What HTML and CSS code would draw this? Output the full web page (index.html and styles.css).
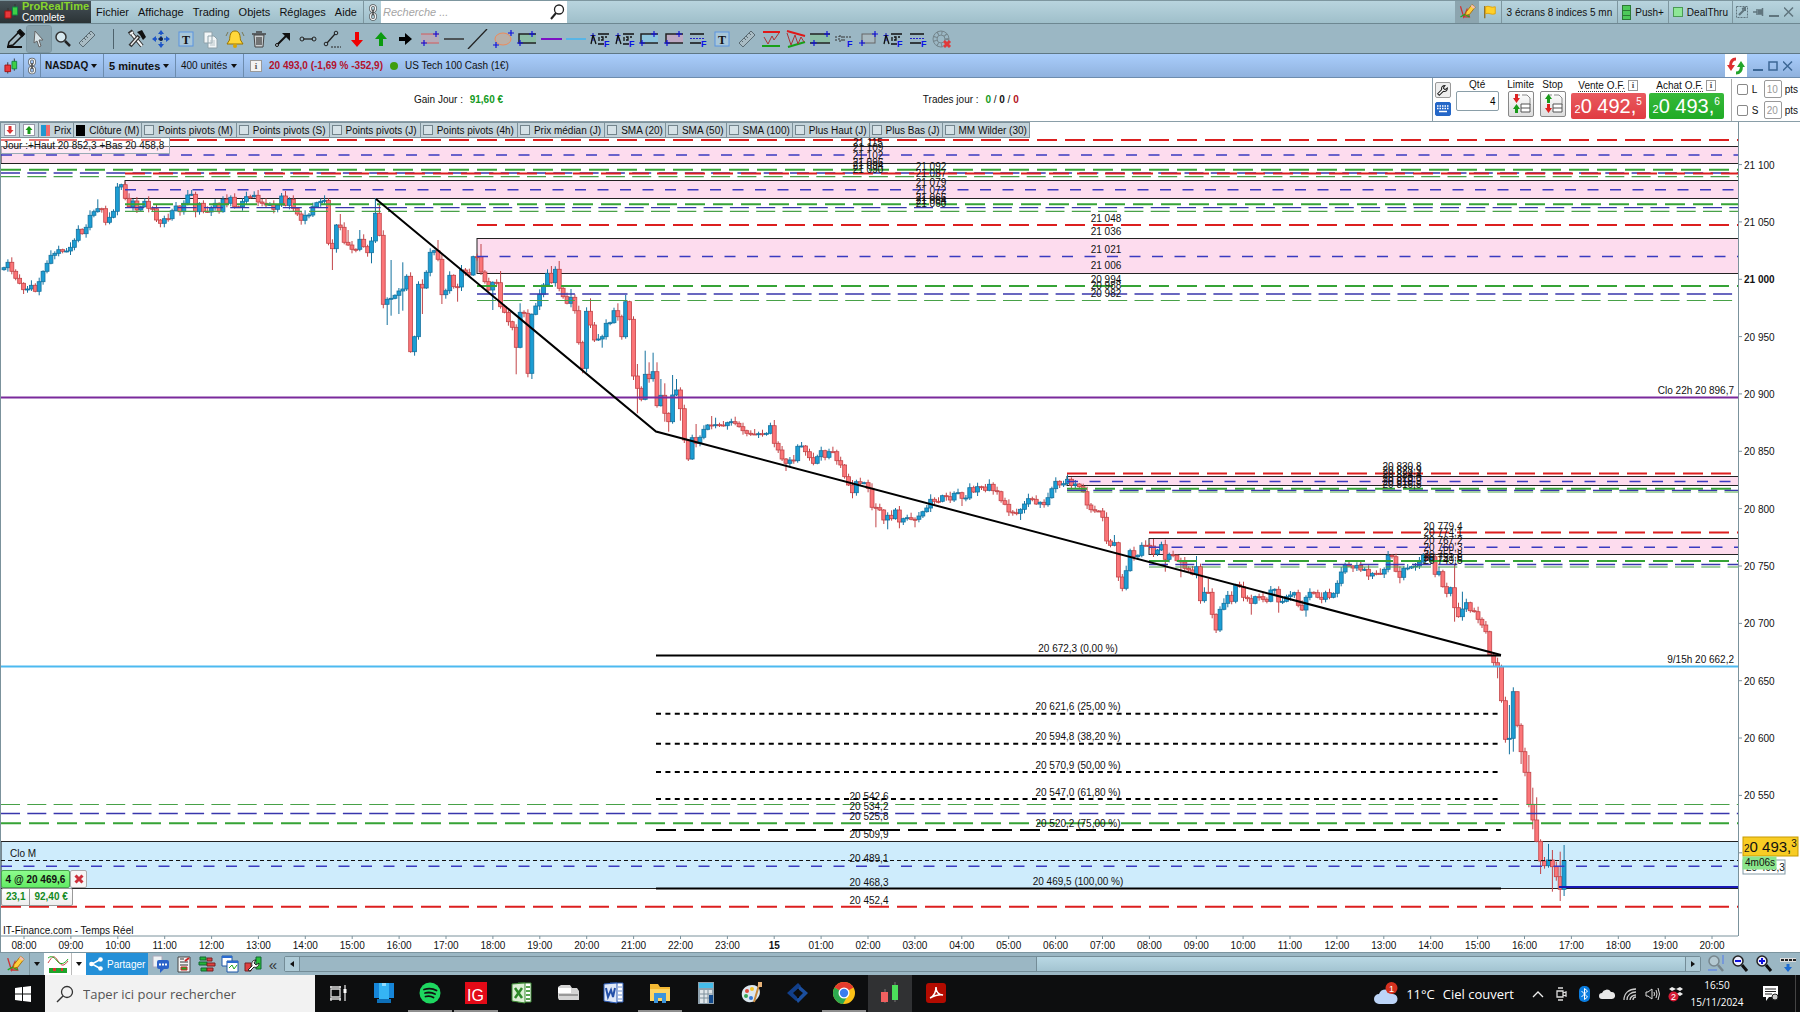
FILE: index.html
```html
<!DOCTYPE html>
<html lang="fr">
<head>
<meta charset="utf-8">
<title>ProRealTime Complete - NASDAQ</title>
<link rel="stylesheet" href="styles.css">
</head>
<body>
<svg class="sprite" aria-hidden="true">
  <symbol id="i-candles" viewBox="0 0 16 16"><path d="M4 4v12M11 0v13" stroke="#333" stroke-width="1"/><path d="M1 7h6v7H1z" fill="#e8383c" stroke="#a11"/><path d="M8.500 3h5v8h-5z" fill="#3ecf45" stroke="#184"/></symbol>
  <symbol id="i-link" viewBox="0 0 10 18"><g fill="none" stroke="#555" stroke-width="2.500"><rect x="2.500" y="2" width="5" height="6" rx="2.500"/><rect x="2.500" y="10" width="5" height="6" rx="2.500"/></g><g fill="none" stroke="#f2f6f7" stroke-width="1.200"><rect x="2.500" y="2" width="5" height="6" rx="2.500"/><rect x="2.500" y="10" width="5" height="6" rx="2.500"/></g><path d="M5 6v6" stroke="#444" stroke-width="1.500"/></symbol>
  <symbol id="i-draw" viewBox="0 0 22 20"><path d="M3 3l4 13 4-9 3 9h-8" fill="none" stroke="#c33" stroke-width="1.500"/><path d="M3 16l5-3 6 3" fill="none" stroke="#2a2" stroke-width="1.500"/><path d="M9 14l1-4 7-9 4 3-7 9z" fill="#ffcf3c" stroke="#a66a00"/><path d="M17 1l4 3-1.500 2-4-3z" fill="#f3bdb5"/></symbol>
  <symbol id="i-fibtext" viewBox="0 0 22 20"><path d="M4 4v8M1.500 6.500h5" stroke="#11c"/><path d="M4 6L2 15M4 6l3 9M9 5h11M9 15h6M10 8v4M12 8h2v3h-2M16 8h2" fill="none" stroke="#111" stroke-width="1.300"/></symbol>
  <symbol id="i-fiblines" viewBox="0 0 22 20"><path d="M3 5h14M3 14h11" stroke="#111" stroke-width="1.500"/><path d="M3 9.500h14" stroke="#22c" stroke-dasharray="2 1"/></symbol>
  <symbol id="i-frame" viewBox="0 0 22 20"><rect x="4" y="3" width="14" height="14" fill="#a8c6d8" stroke="#5a94e0"/></symbol>
  <symbol id="i-ruler" viewBox="0 0 22 20"><path d="M3 14L15 2l4 4L7 18z" fill="#a9bcc4" stroke="#596a72"/><path d="M5 11l2 2M8 9l2 2M10 7l2 2M13 4l2 2" stroke="#596a72"/></symbol>
  <symbol id="i-lens" viewBox="0 0 22 20"><circle cx="9" cy="8" r="5" fill="#d7e8ef" stroke="#333" stroke-width="1.500"/><path d="M13 12l5 5" stroke="#222" stroke-width="2.500"/></symbol>
  <symbol id="i-plus-c" viewBox="0 0 6 6"><path d="M3 0v6M0 3h6" stroke="#11d" stroke-width="1.200"/></symbol>
  <symbol id="i-wrench" viewBox="0 0 16 16"><path d="M2 12l5-5c-1-3 1-5 4-5L9 5l2 2 3-2c0 3-2 5-5 4l-5 5z" fill="#fff" stroke="#222" stroke-width="1.300"/></symbol>
</svg>

<div class="app">
  <header class="menubar">
    <div class="brand">
      <svg width="16" height="16"><use href="#i-candles"/></svg>
      <span><b>ProRealTime</b><i>Complete</i></span>
    </div>
    <nav class="menus">
      <button>Fichier</button><button>Affichage</button><button>Trading</button><button>Objets</button><button>Réglages</button><button>Aide</button>
    </nav>
    <button class="menu-link" aria-label="Lier"><svg width="10" height="19"><use href="#i-link"/></svg></button>
    <label class="search">
      <input type="text" placeholder="Recherche ..." aria-label="Recherche">
      <svg width="15" height="16" viewBox="0 0 15 16"><circle cx="9" cy="5.500" r="4.500" fill="none" stroke="#222" stroke-width="1.300"/><path d="M6 9l-5 6" stroke="#222" stroke-width="2"/></svg>
    </label>
    <div class="spacer"></div>
    <button class="status on" aria-label="Dessin"><svg width="19" height="18"><use href="#i-draw"/></svg></button>
    <button class="status flag" aria-label="Drapeau"><svg width="16" height="16" viewBox="0 0 16 16"><path d="M2 1v14" stroke="#8a6a20" stroke-width="1.500"/><path d="M3 2c4-2 6 2 11 0v8c-5 2-7-2-11 0z" fill="#ffd02a" stroke="#e0a000"/></svg></button>
    <button class="status screens">3 écrans 8 indices 5 mn</button>
    <button class="status"><span class="push-ico"></span>Push+</button>
    <button class="status"><span class="deal-ico"></span>DealThru</button>
    <div class="status winctl">
      <svg width="12" height="12" viewBox="0 0 12 12"><rect x=".5" y=".5" width="11" height="11" fill="none" stroke="#60757e" stroke-dasharray="2 1"/><path d="M3 9l5-5M6 3l3-1v3" stroke="#60757e" stroke-width="2" fill="none"/></svg>
      <svg width="11" height="12" viewBox="0 0 11 12"><path d="M0 6h4M4 3v6M5 4h4v4H5M9.500 2v8" stroke="#60757e" stroke-width="1.500" fill="#60757e"/></svg>
      <svg width="10" height="12" viewBox="0 0 10 12"><path d="M0 10h10" stroke="#60757e" stroke-width="2"/></svg>
      <svg width="10" height="12" viewBox="0 0 10 12"><path d="M0 1.500l9 9M9 1.500l-9 9" stroke="#60757e" stroke-width="1.500"/></svg>
    </div>
  </header>

  <div class="toolbar">
    <div class="tools-main">
      <button aria-label="Crayon"><svg viewBox="0 0 22 20"><path d="M5 13L15 3l4 3-10 10-5 1z" fill="#a5bac3" stroke="#111" stroke-width="1.500"/><path d="M14 3l2-2 4 4-2 2zM3 18h15" stroke="#111" stroke-width="2"/></svg></button>
      <button class="active" aria-label="Curseur"><svg viewBox="0 0 22 20"><path d="M7 2l8 9-4 0 2 6-2 1-2-6-3 2z" fill="#dbe6ea" stroke="#666"/></svg></button>
      <button aria-label="Loupe"><svg><use href="#i-lens"/></svg></button>
      <button aria-label="Règle"><svg><use href="#i-ruler"/></svg></button>
    </div>
    <span class="tool-sep"></span>
    <div class="tools-objects">
      <button aria-label="Outils"><svg viewBox="0 0 22 20"><path d="M6 5l10 12M3 5l4-3" stroke="#333" stroke-width="4"/><path d="M6 5l10 12M4 5l3-2" stroke="#f4f7f8" stroke-width="2"/><path d="M4 17L13 7" stroke="#333" stroke-width="4"/><path d="M5 16l7-8" stroke="#eee" stroke-width="1.500"/><path d="M11 3l5-2 4 7-3 3-3-5z" fill="#111"/></svg></button>
      <button aria-label="Déplacer"><svg viewBox="0 0 22 20"><path d="M11 4v12M5 10h12" stroke="#1c55c8" stroke-width="1.500" stroke-dasharray="2 1"/><path d="M11 1l3 4H8zM11 19l3-4H8zM2 10l4-3v6zM20 10l-4-3v6z" fill="#1c55c8"/><circle cx="11" cy="10" r="2" fill="#124"/></svg></button>
      <button aria-label="Texte"><svg viewBox="0 0 22 20"><use href="#i-frame"/><text x="7" y="15" class="glyph-t">T</text></svg></button>
      <button aria-label="Copier"><svg viewBox="0 0 22 20"><path d="M5 3h8v11H5zM9 7h6l3 3v9H9z" fill="#f2f6f7" stroke="#8fa2aa"/><path d="M11 12h5M11 14h5M11 16h5" stroke="#b7c4c9"/></svg></button>
      <button aria-label="Alerte"><svg viewBox="0 0 22 20"><path d="M11 2c5 0 5 5 5.500 9l2.500 4H3l2.500-4C6 7 6 2 11 2z" fill="#ffd83a" stroke="#9a7400"/><circle cx="11" cy="17" r="2" fill="#d9a400"/><path d="M4 3L2 7M18 3l2 4" stroke="#775" fill="none"/></svg></button>
      <button aria-label="Supprimer"><svg viewBox="0 0 22 20"><path d="M6 6h10l-1 12H7z" fill="#c9ced0" stroke="#444"/><path d="M4 5h14M8 3h6M9 8v8M11 8v8M13 8v8" stroke="#444" stroke-width="1.300"/></svg></button>
      <button aria-label="Flèche"><svg viewBox="0 0 22 20"><path d="M5 16L14 7" stroke="#111" stroke-width="2"/><path d="M10 4h8v8z" fill="#111"/><circle cx="5" cy="16" r="1.500" fill="#b8c6cc" stroke="#111"/></svg></button>
      <button aria-label="Segment"><svg viewBox="0 0 22 20"><path d="M6 10h10" stroke="#222" stroke-width="1.300"/><circle cx="5" cy="10" r="2" fill="none" stroke="#222"/><circle cx="17" cy="10" r="2" fill="none" stroke="#222"/></svg></button>
      <button aria-label="Demi-droite"><svg viewBox="0 0 22 20"><path d="M6 14L14 5" stroke="#222" stroke-width="1.300"/><path d="M10 18h10" stroke="#222" stroke-dasharray="2 1"/><circle cx="5" cy="15" r="1.800" fill="none" stroke="#222"/><circle cx="15" cy="4" r="1.800" fill="none" stroke="#222"/></svg></button>
      <button aria-label="Flèche bas"><svg viewBox="0 0 22 20"><path d="M9 3h4v8h4l-6 7-6-7h4z" fill="#f00000"/></svg></button>
      <button aria-label="Flèche haut"><svg viewBox="0 0 22 20"><path d="M9 17h4V10h4l-6-7-6 7h4z" fill="#0b9b10"/></svg></button>
      <button aria-label="Flèche droite"><svg viewBox="0 0 22 20"><path d="M5 8h6V4l7 6-7 6v-4H5z" fill="#000"/></svg></button>
      <button aria-label="Canal"><svg viewBox="0 0 22 20"><path d="M2 5h18v9H2z" fill="#b5abb8"/><path d="M2 5h18M2 14h18" stroke="#d45a5a"/><use href="#i-plus-c" x="14" y="2" width="6" height="6"/><use href="#i-plus-c" x="2" y="11" width="6" height="6"/></svg></button>
      <button aria-label="Horizontale"><svg viewBox="0 0 22 20"><path d="M1 10h20" stroke="#333" stroke-width="1.500"/></svg></button>
      <button aria-label="Droite"><svg viewBox="0 0 22 20"><path d="M1 20L20 0" stroke="#222" stroke-width="1.300"/></svg></button>
      <button aria-label="Ellipse"><svg viewBox="0 0 22 20"><ellipse cx="11" cy="10" rx="8" ry="6" fill="#b9b0a8" stroke="#ef8b5a"/><use href="#i-plus-c" x="16" y="1" width="6" height="6"/><use href="#i-plus-c" x="1" y="13" width="6" height="6"/></svg></button>
      <button aria-label="Rectangle vert"><svg viewBox="0 0 22 20"><path d="M3 5h17v9H3z" fill="#8bbda5"/><path d="M20 5H3v9h17" fill="none" stroke="#222" stroke-width="1.500"/><use href="#i-plus-c" x="13" y="2" width="6" height="6"/><use href="#i-plus-c" x="1" y="11" width="6" height="6"/></svg></button>
      <button aria-label="Ligne violette"><svg viewBox="0 0 22 20"><path d="M0 10h21" stroke="#7d12c4" stroke-width="2"/></svg></button>
      <button aria-label="Ligne bleue"><svg viewBox="0 0 22 20"><path d="M1 10h20" stroke="#42b5f2" stroke-width="1.500"/></svg></button>
      <button aria-label="Fibonacci 1"><svg viewBox="0 0 22 20"><use href="#i-fibtext"/><text x="15" y="18" class="glyph-f">F</text></svg></button>
      <button aria-label="Fibonacci 2"><svg viewBox="0 0 22 20"><use href="#i-fibtext"/><text x="15" y="18" class="glyph-f">F</text></svg></button>
      <button aria-label="Zone bleue"><svg viewBox="0 0 22 20"><path d="M3 5h17v9H3z" fill="#8cc4dc"/><path d="M20 5H3v9h17" fill="none" stroke="#222" stroke-width="1.500"/><use href="#i-plus-c" x="13" y="2" width="6" height="6"/><use href="#i-plus-c" x="1" y="11" width="6" height="6"/></svg></button>
      <button aria-label="Zone rose"><svg viewBox="0 0 22 20"><path d="M3 5h17v9H3z" fill="#bda9c2"/><path d="M20 5H3v9h17" fill="none" stroke="#222" stroke-width="1.500"/><use href="#i-plus-c" x="13" y="2" width="6" height="6"/><use href="#i-plus-c" x="1" y="11" width="6" height="6"/></svg></button>
      <button aria-label="Niveaux"><svg viewBox="0 0 22 20"><use href="#i-fiblines"/><text x="14" y="18" class="glyph-f">F</text></svg></button>
      <button aria-label="Note"><svg viewBox="0 0 22 20"><use href="#i-frame"/><text x="7" y="15" class="glyph-t">T</text></svg></button>
      <button aria-label="Mesure"><svg><use href="#i-ruler"/></svg></button>
      <button aria-label="Canal auto"><svg viewBox="0 0 22 20"><path d="M3 3h17" stroke="#e01818" stroke-width="2"/><path d="M2 17h18" stroke="#18a018" stroke-width="2"/><path d="M4 8l4 7 4-8 2 4 5-7" fill="none" stroke="#a33"/></svg></button>
      <button aria-label="Triangle auto"><svg viewBox="0 0 22 20"><path d="M2 2l18 5" stroke="#e01818" stroke-width="2"/><path d="M3 18l17-5" stroke="#18a018" stroke-width="2"/><path d="M2 4l4 12 4-10 3 9 3-7 3 5" fill="none" stroke="#a33"/></svg></button>
      <button aria-label="Parallèles"><svg viewBox="0 0 22 20"><path d="M1 5h20v9H1z" fill="#8bbda5"/><path d="M1 5h20M1 14h20" stroke="#222" stroke-width="1.500"/><use href="#i-plus-c" x="15" y="2" width="6" height="6"/><use href="#i-plus-c" x="2" y="11" width="6" height="6"/></svg></button>
      <button aria-label="Extension"><svg viewBox="0 0 22 20"><path d="M3 7v6M6 7h3v5H6zM11 7v5M13 8h5" fill="none" stroke="#333" stroke-dasharray="2 1"/><text x="14" y="18" class="glyph-f">F</text></svg></button>
      <button aria-label="Rectangle"><svg viewBox="0 0 22 20"><rect x="4" y="5" width="13" height="9" fill="#a8b9c0" stroke="#666"/><use href="#i-plus-c" x="14" y="2" width="6" height="6"/><use href="#i-plus-c" x="1" y="11" width="6" height="6"/></svg></button>
      <button aria-label="Fibonacci 3"><svg viewBox="0 0 22 20"><use href="#i-fibtext"/><text x="15" y="18" class="glyph-f">F</text></svg></button>
      <button aria-label="Niveaux 2"><svg viewBox="0 0 22 20"><use href="#i-fiblines"/><text x="14" y="18" class="glyph-f">F</text></svg></button>
      <button aria-label="Effacer"><svg viewBox="0 0 22 20"><circle cx="10" cy="10" r="8" fill="none" stroke="#75868d"/><circle cx="10" cy="10" r="4" fill="none" stroke="#75868d"/><circle cx="10" cy="10" r="6" fill="none" stroke="#75868d" stroke-width="4" stroke-dasharray="1 3"/><path d="M12 12h8v7h-8z" fill="#9bb5c1"/><path d="M13 12l6 6M19 12l-6 6" stroke="#e03a3a" stroke-width="3"/></svg></button>
    </div>
  </div>

  <div class="titlebar">
    <div class="cell ico"><svg width="16" height="16"><use href="#i-candles"/></svg></div>
    <div class="cell link"><svg width="10" height="18"><use href="#i-link"/></svg></div>
    <button class="cell drop symbol"><b>NASDAQ</b></button>
    <button class="cell drop frame"><b>5 minutes</b></button>
    <button class="cell drop units">400 unités</button>
    <div class="quote"><span class="info">i</span><b>20 493,0 (-1,69 % -352,9)</b><span class="dot"></span><span>US Tech 100 Cash (1€)</span></div>
    <div class="spacer"></div>
    <button class="refresh" aria-label="Actualiser"><svg width="18" height="18" viewBox="0 0 18 18"><path d="M9 2C5 2 3.500 5 3.500 9" fill="none" stroke="#dc3030" stroke-width="3"/><path d="M0 8h8l-4 6z" fill="#dc3030"/><path d="M9 16c4 0 5.500-3 5.500-7" fill="none" stroke="#23a62c" stroke-width="3"/><path d="M10 10h8l-4-6z" fill="#23a62c"/></svg></button>
    <div class="winbox">
      <svg width="10" height="12" viewBox="0 0 10 12"><path d="M0 10h10" stroke="#3c6795" stroke-width="2"/></svg>
      <svg width="10" height="12" viewBox="0 0 10 12"><path d="M1 2h8v8H1z" fill="none" stroke="#3c6795" stroke-width="1.500"/></svg>
      <svg width="10" height="12" viewBox="0 0 10 12"><path d="M0 1.500l9 9M9 1.500l-9 9" stroke="#3c6795" stroke-width="1.500"/></svg>
    </div>
  </div>

  <section class="trade">
    <div class="day-stats">
      <div>Gain Jour : <b class="up">91,60 €</b></div>
      <div>Trades jour : <b class="up">0</b> / <b>0</b> / <b class="down">0</b></div>
    </div>
    <div class="order">
      <div class="order-tools">
        <button aria-label="Réglages"><svg width="13" height="13"><use href="#i-wrench"/></svg></button>
        <button class="kbd" aria-label="Clavier"><svg width="14" height="10" viewBox="0 0 14 10"><path d="M1 2h12M1 4.500h12" stroke="#fff" stroke-width="1.500" stroke-dasharray="1.500 1"/><path d="M3 7.500h8" stroke="#fff" stroke-width="1.500"/></svg></button>
      </div>
      <label class="qty"><span>Qté</span><input type="text" value="4"></label>
      <div class="kind"><span>Limite</span><button aria-label="Ordre limite"><svg width="20" height="20" viewBox="0 0 20 20"><path d="M11 1h5l3 3v7M5 1h4" fill="none" stroke="#888"/><path d="M10 10h9v8h-9zM10 14h9" fill="#fff" stroke="#555"/><path d="M4 0h3v4h2L5.500 9 2 4h2z" fill="#d22"/><path d="M4 19h3v-4h2l-3.500-5L2 15h2z" fill="#1a9a1a"/></svg></button></div>
      <div class="kind"><span>Stop</span><button aria-label="Ordre stop"><svg width="20" height="20" viewBox="0 0 20 20"><path d="M11 1h5l3 3v7M5 1h4" fill="none" stroke="#888"/><path d="M10 10h9v8h-9zM10 14h9" fill="#fff" stroke="#555"/><path d="M4 9h3V5h2L5.500 0 2 5h2z" fill="#1a9a1a"/><path d="M4 10h3v4h2l-3.500 5L2 14h2z" fill="#d22"/></svg></button></div>
      <div class="side sell"><span><u>Vente O.F.</u><em>i</em></span><button><small>2</small>0 492,<sup>5</sup></button></div>
      <div class="side buy"><span><u>Achat O.F.</u><em>i</em></span><button><small>2</small>0 493,<sup>6</sup></button></div>
      <div class="offsets">
        <div><label><input type="checkbox"> L</label><input type="text" value="10" aria-label="Points L"> pts</div>
        <div><label><input type="checkbox"> S</label><input type="text" value="20" aria-label="Points S"> pts</div>
      </div>
    </div>
  </section>

  <main class="chart">
    <svg id="plot" class="plot" role="img" aria-label="NASDAQ 5 minutes"></svg>
    <div class="legend">
      <button aria-label="Baisse"><svg width="12" height="12" viewBox="0 0 12 12"><rect x=".5" y=".5" width="11" height="11" fill="#fff" stroke="#99a"/><path d="M4.500 2h3v4h2L6 10 2.500 6h2z" fill="#d33"/></svg></button>
      <button aria-label="Hausse"><svg width="12" height="12" viewBox="0 0 12 12"><rect x=".5" y=".5" width="11" height="11" fill="#fff" stroke="#99a"/><path d="M4.500 10h3V6h2L6 2 2.500 6h2z" fill="#1a9a1a"/></svg></button>
      <span class="key"><i class="sw-price"></i>Prix</span>
      <span class="key"><i class="sw-close"></i>Clôture (M)</span>
      <label class="long"><input type="checkbox">Points pivots (M)</label>
      <label class="long"><input type="checkbox">Points pivots (S)</label>
      <label class="long"><input type="checkbox">Points pivots (J)</label>
      <label class="long"><input type="checkbox">Points pivots (4h)</label>
      <label class="long"><input type="checkbox">Prix médian (J)</label>
      <label><input type="checkbox">SMA (20)</label>
      <label><input type="checkbox">SMA (50)</label>
      <label><input type="checkbox">SMA (100)</label>
      <label><input type="checkbox">Plus Haut (J)</label>
      <label><input type="checkbox">Plus Bas (J)</label>
      <label><input type="checkbox">MM Wilder (30)</label>
    </div>
    <div class="day-range">Jour :+Haut 20 852,3 +Bas 20 458,8</div>
    <div class="position">
      <div><button class="pos-main">4 @ 20 469,6</button><button class="pos-close" aria-label="Fermer"><svg width="10" height="10" viewBox="0 0 10 10"><path d="M1.500 1.500l7 7M8.500 1.500l-7 7" stroke="#cc2f3a" stroke-width="3"/></svg></button></div>
      <div class="pos-gain"><span>23,1</span><span>92,40 €</span></div>
    </div>
  </main>

  <footer class="navbar">
    <button class="n-draw" aria-label="Dessiner"><svg width="20" height="19"><use href="#i-draw"/></svg></button>
    <button class="n-arrow" aria-label="Options dessin"></button>
    <button class="n-indic" aria-label="Indicateurs"><svg width="22" height="20" viewBox="0 0 22 20"><path d="M1 9c5-8 6-8 10-2s6 5 10 0" fill="none" stroke="#c44"/><path d="M1 4c5-4 8 2 10 4s6 3 10-3" fill="none" stroke="#2a2"/><path d="M2 14h18v5H2z" fill="#1fa32a"/><path d="M6 14h3v3H6zM14 14h2v3h-2z" fill="#d33"/></svg></button>
    <button class="n-arrow white" aria-label="Options indicateurs"></button>
    <button class="share"><svg width="14" height="14" viewBox="0 0 14 14"><path d="M12 2L3 7l9 5" fill="none" stroke="#fff" stroke-width="1.500"/><circle cx="11.500" cy="2.500" r="2.300" fill="#fff"/><circle cx="2.500" cy="7" r="2.300" fill="#fff"/><circle cx="11.500" cy="11.500" r="2.300" fill="#fff"/></svg>Partager</button>
    <div class="n-icons">
      <button aria-label="Messages"><svg viewBox="0 0 18 18"><path d="M1 1h9v11H1z" fill="#eef3f5" stroke="#aab"/><rect x="5" y="5" width="12" height="9" rx="2" fill="#2a62c9"/><path d="M8 14v4l4-4z" fill="#2a62c9"/><path d="M7 9.500h2M10 9.500h2M13 9.500h2" stroke="#fff" stroke-width="2"/></svg></button>
      <button aria-label="Rapport"><svg viewBox="0 0 18 18"><path d="M3 2h12v15H3z" fill="#f4f4f4" stroke="#444"/><path d="M5 4h4M5 7h8M5 10h8" stroke="#333"/><path d="M10 6l4-3" stroke="#c22" stroke-width="2"/><path d="M6 12h6v3H6z" stroke="#c22" fill="#2a2"/></svg></button>
      <button aria-label="Carnet"><svg viewBox="0 0 18 18"><path d="M2 2h6v3H2zM1 7h8v3H1zM3 13h6v3H3z" fill="#25b535" stroke="#163"/><path d="M9 3h5v3H9zM9 8h8v3H9zM9 13h6v3H9z" fill="#e04040" stroke="#722"/></svg></button>
      <button aria-label="Fenêtres"><svg viewBox="0 0 18 18"><path d="M1 1h10v10H1z" fill="#fff" stroke="#1d57a8"/><path d="M6 6h11v11H6z" fill="#fff" stroke="#1d57a8"/><path d="M1 2h10M6 7h11" stroke="#2a6bd0" stroke-width="2"/><path d="M8 13l3-3 2 4 3-4" fill="none" stroke="#2a2"/></svg></button>
      <button aria-label="Automatique"><svg viewBox="0 0 18 18"><path d="M12 2h5v12h-5z" fill="#2abf3a" stroke="#163"/><path d="M1 8h6v8H1z" fill="#e04040" stroke="#722"/><path d="M4 15l4-4c-1-4 1-6 4-6l-2 3 2 2 3-2c0 4-3 5-5 4l-4 4z" fill="#fff" stroke="#222"/></svg></button>
    </div>
    <button class="collapse" aria-label="Réduire">«</button>
    <div class="scrollbar">
      <button class="sb-left" aria-label="Gauche"></button>
      <div class="sb-track"></div>
      <div class="sb-thumb"></div>
      <button class="sb-right" aria-label="Droite"></button>
    </div>
    <div class="zoomers">
      <button aria-label="Ajuster"><svg viewBox="0 0 20 20"><circle cx="8" cy="7" r="5" fill="#b4c9d2" stroke="#77868d" stroke-width="1.500"/><path d="M12 11l5 6" stroke="#77868d" stroke-width="2.500"/><path d="M17 1v9M2 16h9" stroke="#6b8fe0" stroke-width="1.500"/></svg></button>
      <button aria-label="Dézoomer"><svg viewBox="0 0 20 20"><circle cx="8" cy="7" r="5" fill="#eef" stroke="#222" stroke-width="1.500"/><path d="M12 11l5 6" stroke="#111" stroke-width="3"/><path d="M5 7h6" stroke="#11d" stroke-width="2"/></svg></button>
      <button aria-label="Zoomer"><svg viewBox="0 0 20 20"><circle cx="8" cy="7" r="5" fill="#eef" stroke="#222" stroke-width="1.500"/><path d="M12 11l5 6" stroke="#111" stroke-width="3"/><path d="M5 7h6M8 4v6" stroke="#11d" stroke-width="2"/></svg></button>
      <button aria-label="Échelle"><svg viewBox="0 0 20 20"><path d="M2 4h16v4H2z" fill="#ddd"/><path d="M3 6h15" stroke="#222" stroke-width="2" stroke-dasharray="3 1"/><path d="M8.500 10h3v3h2.500l-4 5-4-5h2.500z" fill="#1d6bd0"/></svg></button>
    </div>
  </footer>

  <div class="taskbar">
    <button class="start" aria-label="Démarrer"><svg width="16" height="16" viewBox="0 0 16 16"><path d="M0 2l7-1v6.500H0zM8 1l8-1v7.500H8zM0 8.500h7V15l-7-1zM8 8.500h8V16l-8-1z" fill="#fff"/></svg></button>
    <label class="win-search"><svg width="18" height="18" viewBox="0 0 18 18"><circle cx="11" cy="7" r="5.500" fill="none" stroke="#333" stroke-width="1.300"/><path d="M7 11l-6 6" stroke="#333" stroke-width="1.500"/></svg><input type="text" placeholder="Taper ici pour rechercher" aria-label="Taper ici pour rechercher"></label>
    <div class="apps">
      <button aria-label="Affichage des tâches"><svg viewBox="0 0 24 24"><path d="M5 8h9v8H5zM5 5v2M14 5v2M4 6h11M5 17v3M14 17v3M4 18h11M19 4v16" fill="none" stroke="#ddd" stroke-width="1.300"/><path d="M17.500 8h3v4h-3z" fill="#fff"/></svg></button>
      <button aria-label="Bureau"><svg viewBox="0 0 24 24"><path d="M2 2h20v15H2z" fill="#1686d9"/><path d="M7 2h10v17H7z" fill="#35b4f4"/><path d="M5 18h14v4H5z" fill="#0d6fb8"/><path d="M10 2h4v3h-4z" fill="#8fdcff"/></svg></button>
      <button class="run" aria-label="Spotify"><svg viewBox="0 0 24 24"><circle cx="12" cy="12" r="10.500" fill="#1ed760"/><path d="M6 8.500c5-1.500 9-1 12.500 1M7 12c4-1 7-.5 10 1M7.500 15.500c3-.8 6-.3 8 1" fill="none" stroke="#111" stroke-width="1.800" stroke-linecap="round"/></svg></button>
      <button class="run" aria-label="IG"><svg viewBox="0 0 24 24"><path d="M1 1h22v22H1z" fill="#e20a17"/><text x="3" y="20" class="ig">IG</text></svg></button>
      <button aria-label="Excel"><svg viewBox="0 0 24 24"><path d="M8 2h13v19H8z" fill="#fff" stroke="#3d8a35"/><path d="M2 3l13-1v20L2 20z" fill="#dcefd5" stroke="#3d8a35"/><path d="M5 7l7 10M12 7L5 17" stroke="#2f8a2a" stroke-width="2.500"/><path d="M16 6h4M16 10h4M16 14h4M16 18h4" stroke="#59a550" stroke-width="2"/></svg></button>
      <button aria-label="Imprimante"><svg viewBox="0 0 24 24"><path d="M2 6l3-2h9l2 3h5l2 3v9H3L2 17z" fill="#d5d5d5"/><path d="M2 7h13v5H2z" fill="#fff"/><path d="M3 14h19" stroke="#999" stroke-width="2"/></svg></button>
      <button aria-label="Word"><svg viewBox="0 0 24 24"><path d="M8 2h13v19H8z" fill="#fff" stroke="#2b5bb5"/><path d="M2 3l13-1v20L2 20z" fill="#dfe8f8" stroke="#2b5bb5"/><path d="M4 7l2 9 3-7 2 7 2-9" fill="none" stroke="#2450a8" stroke-width="2"/><path d="M16 6h4M16 10h4M16 14h4M16 18h4" stroke="#6c8fd0"/></svg></button>
      <button class="run" aria-label="Explorateur"><svg viewBox="0 0 24 24"><path d="M2 3h8l2 3h10v14H2z" fill="#f3b832"/><path d="M2 8h20v12H2z" fill="#fcd462"/><path d="M6 12h12v10h-4v-5h-4v5H6z" fill="#3b94dc"/></svg></button>
      <button aria-label="Calculatrice"><svg viewBox="0 0 24 24"><path d="M4 1h16v22H4z" fill="#8fa1ad"/><path d="M5 2h14v5H5z" fill="#45bdea"/><path d="M6 9h12v13H6z" fill="#dfe6ea"/><path d="M6 13h12M6 17h12M10 9v13M14 9v13" stroke="#7d8f9b"/><path d="M15 14h4v8h-4z" fill="#134a8c"/></svg></button>
      <button aria-label="Paint"><svg viewBox="0 0 24 24"><path d="M12 4c8 0 9 7 7 11s-6 7-11 6S1 15 2 11s5-7 10-7z" fill="#dce7ef"/><circle cx="7" cy="10" r="2" fill="#e24a3b"/><circle cx="12" cy="8" r="2" fill="#f5c52a"/><circle cx="6" cy="15" r="2" fill="#3aa655"/><circle cx="11" cy="17" r="2" fill="#3578d8"/><path d="M14 21l5-17" stroke="#c98a3d" stroke-width="2"/><path d="M18 1h4v5h-4z" fill="#e7b277"/></svg></button>
      <button aria-label="Outil"><svg viewBox="0 0 24 24"><path d="M1 12L12 2l3 3-8 7 5 5-2 3z" fill="#123f8a"/><path d="M14 5l8 7-10 10-2-3 7-7-5-4z" fill="#1b4f9f"/><path d="M12 8v9" stroke="#0d0e0f" stroke-width="2"/></svg></button>
      <button class="run" aria-label="Chrome"><svg viewBox="0 0 24 24"><circle cx="12" cy="12" r="11" fill="#fbc116"/><path d="M12 12L2.500 6.500A11 11 0 0 1 21.500 6.500z" fill="#e33b2e"/><path d="M2.500 6.500A11 11 0 0 0 11 23l5-9-4-2z" fill="#2da94f"/><circle cx="12" cy="12" r="5.500" fill="#fff"/><circle cx="12" cy="12" r="4.200" fill="#3b7ded"/></svg></button>
      <button class="focus" aria-label="ProRealTime"><svg viewBox="0 0 24 24"><path d="M7 8v14M17 1v20" stroke="#777"/><path d="M3 11h7v10H3z" fill="#f06060"/><path d="M14 4h6v15h-6z" fill="#4be05a"/></svg></button>
      <button aria-label="Acrobat"><svg viewBox="0 0 24 24"><rect x="2" y="2" width="20" height="20" rx="3" fill="#b30b00"/><path d="M6 17c4-2 6-6 6-11 0 5 3 8 7 8-5-1-9 1-13 3z" fill="none" stroke="#fff" stroke-width="1.500"/></svg></button>
    </div>
    <div class="spacer"></div>
    <button class="weather"><svg width="24" height="24" viewBox="0 0 24 24"><path d="M5 22a5 5 0 0 1 0-10 7 7 0 0 1 13 0 5 5 0 0 1 1 10z" fill="#bcd4f7"/><circle cx="17.500" cy="6" r="6" fill="#d5311f"/><text x="15" y="10" class="badge">1</text></svg><span>11°C</span><span>Ciel couvert</span></button>
    <div class="tray">
      <svg viewBox="0 0 16 16"><path d="M3 11l5-5 5 5" fill="none" stroke="#eee" stroke-width="1.300"/></svg>
      <svg viewBox="0 0 16 16"><path d="M4 5h6v6H4zM10 7l3-1v4l-3-1M5 2h5M5 14h5" fill="none" stroke="#ddd" stroke-width="1.300"/></svg>
      <svg viewBox="0 0 16 16"><rect x="3" y="0" width="11" height="16" rx="5" fill="#0a7de0"/><path d="M5.500 5l6 6-3 2.500v-11L11.500 5l-6 6" fill="none" stroke="#fff"/></svg>
      <svg viewBox="0 0 16 16"><path d="M3 13a3 3 0 0 1 0-6 5 5 0 0 1 9-1 3.500 3.500 0 0 1 1 7z" fill="#e8e8e8"/></svg>
      <svg viewBox="0 0 16 16"><path d="M2 14C2 7 7 3 14 3M5 14c0-5 4-8 9-8M8 14c0-3 3-5 6-5M11 14c0-2 1-3 3-3" fill="none" stroke="#ccc" stroke-width="1.300"/></svg>
      <svg viewBox="0 0 16 16"><path d="M1 6h2l4-3v10L3 10H1zM9 6q1 2 0 4M11 4q2 4 0 8M13 2q3 6 0 12" fill="none" stroke="#ddd"/></svg>
      <svg viewBox="0 0 16 16"><path d="M4 1l4 2-4 2-3-2zM12 1l3 2-3 2-4-2zM12 6l3 2-3 2-4-2z" fill="#eee"/><circle cx="5.500" cy="10.500" r="5" fill="#d31a33"/><text x="3" y="14" class="badge">2</text></svg>
    </div>
    <div class="clock"><span>16:50</span><span>15/11/2024</span></div>
    <button class="notif" aria-label="Notifications"><svg width="17" height="17" viewBox="0 0 17 17"><path d="M1 1h15v11H7l-3 4v-4H1z" fill="#fff"/><path d="M3 4h11M3 6.500h11M3 9h7" stroke="#222"/><circle cx="13" cy="12" r="3" fill="#ccc" stroke="#222"/></svg></button>
  </div>
</div>
<script src="chart.js"></script>
</body>
</html>
```
FILE: styles.css
```css
* { box-sizing: border-box; }
body { margin: 0; font-family: "Liberation Sans", Arial, sans-serif; font-size: 10px; color: #111; background: #fff; }
button { font: inherit; color: inherit; background: none; border: 0; padding: 0; margin: 0; white-space: nowrap; }
input { font: inherit; margin: 0; }
svg { display: block; }
.sprite { position: absolute; width: 0; height: 0; }
.glyph-f { font: bold 9px "Liberation Sans", sans-serif; fill: #0a12e6; }
.glyph-t { font: bold 12px "Liberation Serif", serif; fill: #111; }
.spacer { flex: 1; }
.app { display: flex; flex-direction: column; height: 100vh; overflow: hidden; }

.menubar { display: flex; align-items: stretch; height: 24px; background: linear-gradient(#b8d4de, #9fbfca); border-top: 1px solid #7d969f; border-bottom: 1px solid #6d8791; font-size: 11px; }
.brand { display: flex; align-items: center; gap: 2px; width: 91px; padding-left: 4px; background: linear-gradient(#465258, #2b3336); color: #fff; white-space: nowrap; }
.brand b, .brand i { display: block; font-size: 10px; line-height: 11px; font-style: normal; }
.brand b { color: #86d62c; font-size: 11px; }
.menus { display: flex; align-items: center; gap: 9px; width: 273px; padding-left: 5px; border-right: 1px solid #7d969f; }
.menu-link { width: 17px; display: grid; place-items: center; }
.search { display: flex; align-items: center; width: 186px; padding: 0 2px; background: #fff; }
.search input { flex: 1; min-width: 0; border: 0; outline: 0; padding: 0; font-style: italic; }
.search input::placeholder { color: #a5a5a5; }
.status { display: flex; align-items: center; gap: 4px; padding: 0 4px; border-right: 1px solid #7d969f; font-size: 10px; }
.status.on { background: #8ca5af; border: 0; width: 24px; padding: 0 3px; }
.status.flag { width: 23px; }
.status.screens { padding: 0 5px; }
.push-ico { width: 9px; height: 15px; border: 1px solid #2b7a35; background: repeating-linear-gradient(#4dc95a 0 4px, #2b7a35 4px 5px); }
.deal-ico { width: 10px; height: 10px; border: 1px solid #4a9a55; background: #8ee796; }
.winctl { gap: 5px; border: 0; padding: 0 6px 0 3px; }

.toolbar { display: flex; align-items: center; height: 30px; padding-left: 3px; background: #9bb7c4; border-bottom: 1px solid #5f7884; }
.tools-main { display: flex; }
.toolbar button { width: 24px; height: 26px; padding: 2px 1px; flex: none; }
.toolbar button svg { width: 22px; height: 20px; }
.toolbar .active { background: #89a2ad; outline: 1px solid #7c96a2; border-radius: 2px; }
.tool-sep { width: 1px; height: 20px; margin: 0 11px 0 14px; background: #4e626c; }
.tools-objects { display: flex; justify-content: space-between; width: 829px; }

.titlebar { display: flex; align-items: stretch; height: 24px; background: linear-gradient(#a9cdfb, #90b2de); border-bottom: 1px solid #6d8cae; }
.cell { display: flex; align-items: center; padding: 0 4px; border-right: 1px solid #6d8cae; }
.cell.ico { width: 24px; }
.cell.link { width: 17px; padding: 0 3px; }
.drop { justify-content: space-between; gap: 3px; padding: 0 6px 0 5px; }
.drop::after { content: ""; border: 3px solid transparent; border-top: 4px solid #111; border-bottom: 0; }
.symbol { width: 63px; padding-left: 4px; }
.frame { width: 72px; font-size: 11px; }
.units { width: 68px; }
.quote { display: flex; align-items: center; gap: 7px; padding-left: 6px; }
.quote b { color: #b3122c; }
.info { width: 12px; height: 12px; border: 1px solid #999; background: #f2f2f2; color: #555; font: bold 9px/10px "Liberation Serif", serif; text-align: center; }
.dot { width: 8px; height: 8px; border-radius: 50%; background: #3f9e0e; }
.refresh { width: 22px; display: grid; place-items: center; background: #fff; }
.winbox { display: flex; align-items: center; gap: 5px; padding: 0 7px 0 6px; }

.trade { display: flex; height: 44px; background: #fff; }
.day-stats { flex: 1; display: grid; grid-template-columns: 50% 50%; align-items: center; padding: 0 0 1px 23%; white-space: pre; border-bottom: 1px solid #8a9ea8; }
.up { color: #139a22; }
.down { color: #b3121c; }
.day-stats b.up:first-child { margin-left: 4px; }
.order { display: flex; gap: 4px; padding: 1px 2px 0 2px; border-left: 1px solid #8a9ea8; border-bottom: 1px solid #8a9ea8; }
.order-tools { display: flex; flex-direction: column; gap: 4px; padding-top: 3px; width: 17px; }
.order-tools button { width: 16px; height: 16px; display: grid; place-items: center; border: 1px solid #999; border-radius: 2px; background: #eee; }
.order-tools .kbd { height: 14px; background: #2467c8; border-color: #2467c8; }
.qty, .kind, .side { display: flex; flex-direction: column; align-items: center; line-height: 11px; }
.qty { margin-right: 4px; }
.qty input { width: 43px; height: 20px; margin-top: 1px; padding: 0 2px; border: 1px solid #8a9ea8; border-radius: 2px; text-align: right; }
.kind { width: 28px; }
.kind button { width: 26px; height: 26px; margin-top: 1px; display: grid; place-items: center; border: 1px solid #888; border-radius: 2px; background: linear-gradient(#fff, #ddd); }
.side { margin-right: -1px; }
.side span { display: flex; gap: 3px; height: 13px; align-items: center; white-space: nowrap; }
.side u { text-decoration: none; border-bottom: 1px dotted #333; }
.side em { width: 10px; height: 11px; border: 1px solid #999; font: bold 9px/9px "Liberation Serif", serif; text-align: center; color: #555; }
.side button { width: 75px; height: 26px; margin-top: 1px; border-radius: 2px; color: #fff; font-size: 20px; line-height: 26px; }
.side small { font-size: 11px; }
.side sup { font-size: 10px; line-height: 10px; vertical-align: 8px; }
.sell button { background: linear-gradient(#e95a5f, #e03c42); }
.buy button { background: linear-gradient(#36b93a, #20ab26); }
.offsets { display: flex; flex-direction: column; gap: 3px; margin-left: 4px; padding: 1px 0 0 5px; border-left: 1px solid #aaa; }
.offsets div, .offsets label { display: flex; align-items: center; gap: 3px; }
.offsets label { width: 24px; gap: 4px; }
.offsets input[type="checkbox"] { appearance: none; width: 11px; height: 11px; border: 1px solid #888; border-radius: 2px; background: #fff; }
.offsets input[type="text"] { width: 18px; height: 18px; padding: 0 2px; border: 1px solid #999; border-radius: 2px; color: #999; }

.chart { position: relative; flex: 1; min-height: 0; background: #fff; }
.plot { width: 100%; height: 100%; }
.plot text { font: 10px "Liberation Sans", Arial, sans-serif; fill: #111; }
.plot .strong { font-weight: bold; }
.plot .mid { text-anchor: middle; }
.plot .end { text-anchor: end; }
.plot .big { font-size: 15px; }
.legend { position: absolute; left: 1px; top: 0; display: flex; height: 16px; background: #c3d3da; border: 1px solid #7e929b; border-left: 0; }
.legend > * { display: flex; align-items: center; gap: 4px; padding: 0 2px; border-right: 1px solid #7e929b; white-space: nowrap; }
.legend > :last-child { border: 0; }
.legend > button { width: 19px; padding-left: 3px; }
.legend .long { padding-right: 3px; }
.legend input { appearance: none; width: 10px; height: 10px; border: 1px solid #74858d; background: #d6e2e7; }
.key i { width: 9px; height: 11px; }
.sw-price { background: linear-gradient(90deg, #2298cf 50%, #f26b6b 50%); }
.sw-close { background: #000; }
.day-range { position: absolute; left: 1px; top: 16px; height: 16px; padding: 0 5px 0 2px; border: 1px solid #9aabb5; border-width: 0 1px 1px 0; line-height: 15px; background: #ffffff66; }
.position { position: absolute; left: 1px; bottom: 46px; font-weight: bold; }
.position > div { display: flex; height: 18px; width: max-content; }
.pos-main { width: 69px; background: linear-gradient(#8dfc8d, #62ec64); border: 1px solid #4aa54e; border-radius: 2px; }
.pos-close { width: 17px; display: grid; place-items: center; background: #f6f6f6; border: 1px solid #aaa; border-radius: 2px; }
.pos-gain { color: #138a22; background: linear-gradient(#fff, #eee); border: 1px solid #999; border-radius: 2px; }
.pos-gain span { padding: 0 4px; line-height: 15px; }
.pos-gain span + span { border-left: 1px solid #999; }

.navbar { display: flex; align-items: stretch; height: 23px; background: #9bb7c4; border-top: 1px solid #7c959f; }
.navbar button { display: grid; place-items: center; }
.n-draw { width: 30px; border-right: 1px solid #7c959f; }
.n-arrow { width: 14px; }
.n-arrow::after { content: ""; border: 3px solid transparent; border-top: 4px solid #111; border-bottom: 0; }
.n-indic { width: 28px; background: #fff; border-right: 1px solid #bbb; }
.white { background: #fff; }
.navbar .share { display: flex; align-items: center; gap: 4px; width: 62px; padding-left: 3px; background: #2490d8; color: #fff; }
.n-icons { display: flex; gap: 5px; padding-left: 4px; }
.n-icons button, .n-icons svg { width: 18px; }
.n-icons svg { height: 18px; }
.collapse { width: 22px; font-size: 15px; color: #333; }
.scrollbar { flex: 1; display: flex; height: 16px; margin: 3px 3px 0 0; border: 1px solid #738c97; border-radius: 2px; }
.sb-left, .sb-right { width: 14px; background: #aecbd7; }
.sb-left::after, .sb-right::after { content: ""; border: 3px solid transparent; border-right: 4px solid #111; border-left: 0; }
.sb-right::after { border: 3px solid transparent; border-left: 4px solid #111; border-right: 0; }
.sb-track { flex: 739; border: solid #738c97; border-width: 0 1px; }
.sb-thumb { flex: 651; background: linear-gradient(#b9d8e4, #a3c4d1); border-right: 1px solid #738c97; }
.zoomers { display: flex; gap: 4px; padding: 0 2px; }
.zoomers button, .zoomers svg { width: 20px; }
.zoomers svg { height: 20px; }

.taskbar { display: flex; align-items: stretch; height: 37px; background: #0d0e0f; color: #fff; font-family: "Open Sans", "Noto Sans", sans-serif; font-size: 13px; }
.start { width: 45px; display: grid; place-items: center; }
.win-search { display: flex; align-items: center; gap: 9px; width: 270px; padding-left: 11px; background: #f2f2f2; }
.win-search input { flex: 1; min-width: 0; border: 0; background: none; padding: 0; }
.win-search input::placeholder { color: #555; opacity: 1; }
.apps { display: flex; gap: 2px; padding-left: 1px; }
.apps button { width: 44px; display: grid; place-items: center; border-bottom: 2px solid transparent; }
.apps svg { width: 24px; height: 24px; }
.apps .run { border-bottom-color: #8e8e8e; }
.apps .focus { background: #303133; }
.ig { font: 16px "Liberation Sans", sans-serif; fill: #fff; }
.badge { font: 9px "Liberation Sans", sans-serif; fill: #fff; }
.weather { display: flex; align-items: center; gap: 8px; }
.tray { display: flex; align-items: center; gap: 7px; padding: 0 0 0 16px; }
.tray svg { width: 16px; height: 16px; }
.clock { display: flex; flex-direction: column; justify-content: center; align-items: center; width: 66px; font-size: 10px; line-height: 17px; white-space: nowrap; }
.notif { width: 46px; padding-right: 4px; display: grid; place-items: center; border-right: 1px solid #444; margin-right: 4px; }
```
FILE: chart.js
```js
// The drawing space is 1800 x 830: a plot area plus a fixed price column and time row.
const PLOT_W = 1738, AXIS_W = 62, SPACE_H = 830, TOP = 122, BOTTOM = 936;
const svg = document.getElementById('plot');

// Closing levels, one per five-minute bar, in thirds of a pixel.
const sessionA = [383,367,394,415,430,449,447,436,454,425,394,370,346,340,329,334,333,322,301,268,281,262,226,215,206,206,247,232,214,141,134,175,200,183,210,200,184,205,206,240,250,236,236,212,198,215,190,165,163,215,190,214,216,203,190,215,178,190,172,200,200,184,170,170,166,186,190,195,193,208,195,168,196,178,205,222,241,226,225,200,188,184,181,310,326,255,262,307,315,328,328,298,320,338,303,220,286,493,478,475,466,453,447,409,635,590,433,444,397,337,332,358,464,452,406,440,441,390,398,405,350,350,396,425,450,427,428,500,517,545,562,622,517,520,700,523,498,463,435,400,428,388,445,470,490,472,512,608,685,514,555,600,597,590,550,548,512,530,590,485,538,708,745,778,703,716,695,797,766,820,845,765,750,806,900,957,893,910,892,868,855,856,854,855,857,848,845,850,860,872,880,882,882,881,881,880,857,910,930,957,970,960,962,919,918,935,953,970,950,932,952,935,935,962,975,1010,1035,1058,1025,1030,1028,1045,1102];
const sessionB = [203,210,240,226,236,210,246,236,233,238,238,228,215,204,178,184,184,167,170,180,160,158,175,174,143,156,140,141,151,133,152,155,182,193,216,218,220,208,192,176,178,192,187,194,173,146,124,135,131,118,136,132,140,155,195,209,213,213,232,303,316,308,411,445,392,332,350,346,316,316,318,342,330,314,358,344,346,362,366,385,390,403,380,482,457,457,523,570,508,490,466,484,434,440,472,476,490,470,470,478,484,450,448,486,484,470,465,458,496,510,472,457,458,472,478,458,472,460,430,396,374,378,384,376,390,388,408,400,400,402,388,346,350,394,412,385,384,380,378,366,345,360,350,403,395,440,460,443,503,530,507,488,512,515,538,555,575,645,668,680,782,898,895,755,856,935,997,1093,1140,1204,1263,1277,1260,1280,1310,1348,1262];
const closes = sessionA.map(v => 140 + v / 3).concat(sessionB.map(v => 440 + v / 3));

// Long shadows: bar index -> [high, low]; 0 keeps the usual short shadow.
const wicks = {5:[0,462],24:[178,0],40:[0,262],48:[150,0],49:[155,232],65:[150,0],76:[0,254],84:[0,390],86:[222,0],88:[270,0],91:[270,0],93:[0,350],94:[0,370],95:[175,0],96:[195,0],98:[0,555],99:[360,527],101:[0,522],102:[367,512],107:[0,522],111:[300,0],112:[0,492],116:[0,485],122:[312,0],125:[0,510],127:[393,0],131:[0,703],132:[490,0],134:[0,712],135:[0,717],140:[378,0],142:[363,0],145:[447,0],148:[0,700],150:[475,0],153:[0,623],157:[490,0],159:[465,0],162:[672,820],164:[632,0],165:[667,0],166:[638,0],167:[667,0],168:[717,0],169:[730,845],170:[0,875],171:[705,0],172:[717,0],173:[742,842],177:[852,0],181:[828,0],182:[833,0],197:[840,0],200:[0,993],217:[0,1075],
  223:[190,262],226:[0,268],229:[0,265],233:[0,262],245:[0,198],247:[130,0],260:[0,240],284:[285,0],294:[297,0],297:[0,395],301:[0,412],305:[348,0],308:[416,0],313:[453,0],316:[425,0],319:[0,524],326:[0,518],333:[0,530],354:[333,0],357:[0,430],371:[373,545],373:[455,0],382:[0,715],384:[0,908],385:[795,943],386:[742,935],387:[827,0],388:[0,972],390:[945,0],391:[1043,1168],392:[1072,0],393:[0,1302],395:[1212,0],396:[1230,1355],398:[1235,1383],399:[1215,1368]};

// Supply and demand zones: box, median and the dashed levels beyond it.
const zones = [
  {x:1, red:140, top:146.5, mid:155, low:163.5, green:169.7, blue:173, thin:176.7},
  {x:125, red:173.5, top:180.5, mid:189.7, low:198.5, green:204.3, blue:207.7, thin:211.3},
  {x:477, red:225, top:238.5, mid:256.5, low:273.5, green:286, blue:294, thin:300.5},
  {x:1067, red:473.5, top:476.5, mid:481.5, low:485.5, green:488.7, blue:490.3, thin:492},
  {x:1149, red:532.5, top:538.5, mid:547.3, low:554.5, green:561, blue:564.5, thin:567},
  {x:1, red:906.8, top:841.5, mid:866.3, low:888.5, green:823.3, blue:813.5, thin:804.5, fill:'#ceecfc'}
];
const levels = [
  [868,[['21 115',142],['21 109',147],['21 102',155],['21 096',162],['21 094',165],['21 090',169]]],
  [931,[['21 092',166],['21 087',173],['21 079',182],['21 072',190],['21 066',197],['21 064',200],['21 060',203]]],
  [1106,[['21 048',218],['21 036',231],['21 021',249],['21 006',265],['20 994',279],['20 988',285],['20 982',293]]],
  [1402,[['20 830,8',466],['20 828,9',470],['20 824,4',474],['20 820,0',478],['20 818,3',481],['20 816,5',484]]],
  [1443,[['20 779,4',526],['20 774,1',532],['20 767,2',540],['20 760,3',547],['20 755,8',554],['20 751,6',557],['20 749,5',560]]],
  [1078,[['20 672,3 (0,00 %)',648],['20 621,6 (25,00 %)',706],['20 594,8 (38,20 %)',736],['20 570,9 (50,00 %)',765],['20 547,0 (61,80 %)',792],['20 520,2 (75,00 %)',823],['20 469,5 (100,00 %)',881]]],
  [869,[['20 542,6',796],['20 534,2',806],['20 525,8',816],['20 509,9',834],['20 489,1',858],['20 468,3',882],['20 452,4',900]]]
];

function draw() {
  const box = svg.getBoundingClientRect();
  const kx = (box.width - AXIS_W) / PLOT_W, ky = box.height / SPACE_H;
  const X = x => +(x * kx).toFixed(1), Y = y => +((y - TOP) * ky).toFixed(1);
  const right = X(PLOT_W);
  let out = '';
  const line = (x1, y1, x2, y2, color, w = 1, dash = '') =>
    out += `<line x1="${X(x1)}" y1="${Y(y1)}" x2="${X(x2)}" y2="${Y(y2)}" stroke="${color}" stroke-width="${w}" stroke-dasharray="${dash}"/>`;
  const text = (s, px, y, cls = '') => out += `<text x="${px}" y="${Y(y) + 4}" class="${cls}">${s}</text>`;

  for (const z of zones) {
    out += `<rect x="${X(z.x)}" y="${Y(z.top)}" width="${right - X(z.x) + 2}" height="${Y(z.low) - Y(z.top)}" fill="${z.fill || '#fddcee'}" stroke="#222"/>`;
  }
  const half = 3.91 / 2;
  closes.forEach((c, i) => {
    const open = i ? closes[i - 1] : c + 2;
    const up = c < open, x = 4 + i * 3.91;
    const base = i < sessionA.length ? 140 : 440, w = wicks[i] || [0, 0];
    const top = Math.min(open, c), low = Math.max(open, c);
    const hi = w[0] ? Math.min(top, base + w[0] / 3) : top - 1 - (i * 7 % 5);
    const lo = w[1] ? Math.max(low, base + w[1] / 3) : low + 1 + (i * 11 % 4);
    const edge = up ? '#14729f' : '#c24448';
    line(x, hi, x, lo, edge);
    out += `<rect x="${X(x - half)}" y="${Y(top)}" width="${X(half * 2)}" height="${Math.max(1, Y(low) - Y(top))}" fill="${up ? '#1c9dd3' : '#fb7578'}" stroke="${edge}" stroke-width=".8"/>`;
  });
  for (const z of zones) {
    line(z.x, z.red, PLOT_W, z.red, '#dc1f1f', 2, '20 8');
    line(z.x, z.mid, PLOT_W, z.mid, '#3a3ac0', 1.4, '11 11.500');
    line(z.x, z.green, PLOT_W, z.green, '#36a336', 2, '20 8');
    line(z.x, z.blue, PLOT_W, z.blue, '#3836ac', 1.3, '19 7.300');
    line(z.x, z.thin, PLOT_W, z.thin, '#48a148', 1.2, '19 7.300');
  }
  line(1, 397.5, PLOT_W, 397.5, '#7a2a9c', 2);
  line(1, 666.5, PLOT_W, 666.5, '#4cb9f0', 2);
  line(1, 860.5, PLOT_W, 860.5, '#111', 1, '4 3');
  line(1559, 887, PLOT_W, 887, '#1818b4', 2);

  line(656, 655.5, 1501, 655.5, '#000', 2);
  for (const y of [713.7, 743.7, 772, 799]) line(656, y, 1501, y, '#000', 2, '5 4.400');
  line(656, 830, 1501, 830, '#000', 2, '20 8');
  line(656, 888.5, 1501, 888.5, '#000', 2);
  out += `<polyline points="${X(376)},${Y(199)} ${X(656)},${Y(431.5)} ${X(1501)},${Y(655)}" fill="none" stroke="#000" stroke-width="2"/>`;

  for (const [x, list] of levels) for (const [s, y] of list) text(s, X(x), y, 'mid');
  text('Clo 22h 20 896,7', right - 4, 390, 'end');
  text('9/15h 20 662,2', right - 4, 659, 'end');
  text('Clo M', 10, 853);
  text('IT-Finance.com - Temps Réel', 3, 930);

  // Price column.
  out += `<rect x="${right}" y="0" width="${AXIS_W}" height="${Y(BOTTOM)}" fill="#fff"/>`;
  out += `<path d="M.5 0V${Y(952)}M${right}.500 0V${Y(BOTTOM)}M0 ${Y(BOTTOM)}H${right}" fill="none" stroke="#7b929c"/>`;
  for (let p = 21100; p >= 20500; p -= 50) {
    const y = 566 + (20750 - p) * 1.147;
    line(PLOT_W, y, PLOT_W + 4, y, '#7b929c');
    if (p > 20500) text(String(p).replace(/(\d\d)(\d+)/, '$1 $2'), right + 6, y, p === 21000 ? 'strong' : '');
  }
  const tag = (y, w, h, fill, edge) => out += `<rect x="${right + 5}" y="${Y(y)}" width="${w}" height="${h}" fill="${fill}" stroke="${edge}"/>`;
  tag(860, 42, 14, '#fff', '#8299a5');
  text('20 493,3', right + 8, 867);
  tag(837, 55, 19, '#f8cc24', '#c79a00');
  out += `<text x="${right + 6}" y="${Y(852)}"><tspan>2</tspan><tspan class="big">0 493,</tspan><tspan dy="-5">3</tspan></text>`;
  tag(857, 33, 12, '#8be58b', '#8be58b');
  text('4m06s', right + 7, 862);

  // Time row.
  for (let k = 0; k <= 36; k++) {
    const x = X(24 + k * 46.89), hour = (8 + k) % 24;
    out += `<path d="M${x} ${Y(BOTTOM)}v3" stroke="#7b929c"/>`;
    text(hour ? String(hour).padStart(2, '0') + ':00' : '15', x, 945, hour ? 'mid' : 'mid strong');
  }
  svg.innerHTML = out;
}
draw();
addEventListener('resize', draw);
```
